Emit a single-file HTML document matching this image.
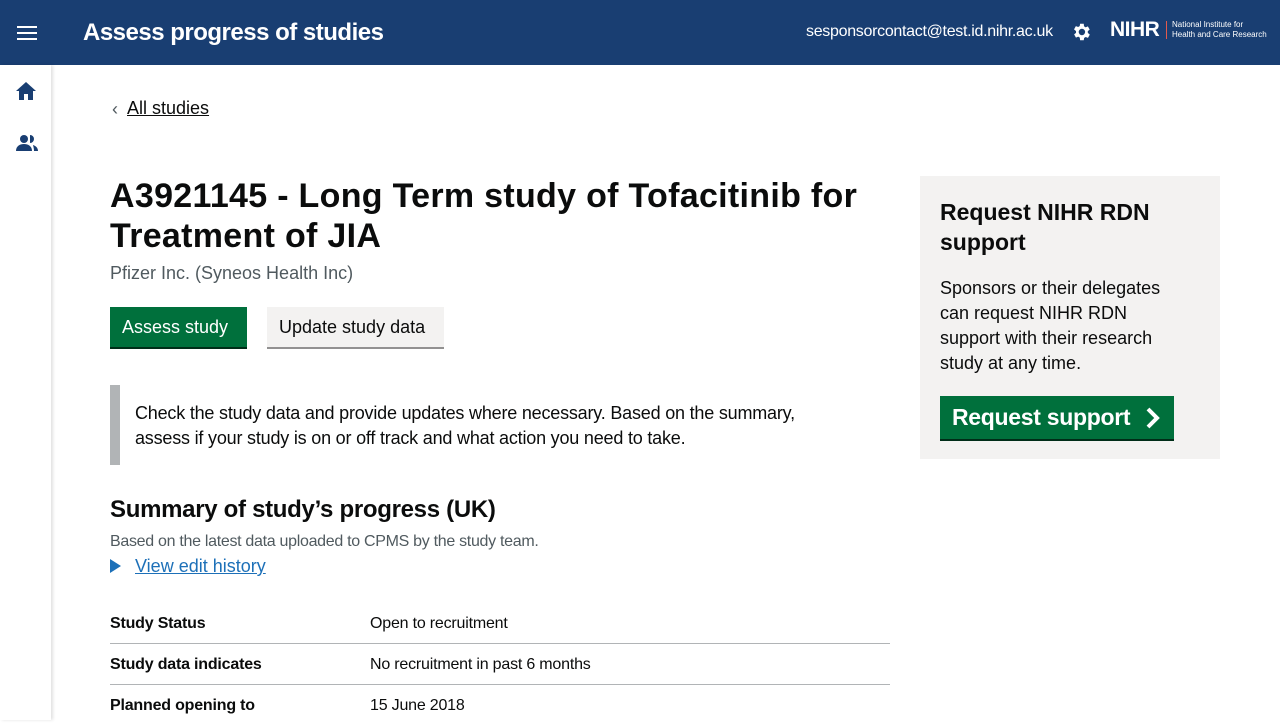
<!DOCTYPE html>
<html><head><meta charset="utf-8"><style>
*{margin:0;padding:0;box-sizing:border-box}
body{width:1280px;height:720px;overflow:hidden;font-family:"Liberation Sans",Arial,sans-serif;background:#fff;color:#0b0c0c;position:relative}
.hdr{position:absolute;left:0;top:0;width:1280px;height:65px;background:#193e72;color:#fff}
.side{position:absolute;left:0;top:65px;width:51px;height:655px;background:#fff;box-shadow:2px 0 3px rgba(0,0,0,.12)}
.a{position:absolute}
.row{position:absolute;left:110px;width:780px;font-size:16px;height:41px;border-bottom:1px solid #b1b4b6}
.row b{position:absolute;left:0;top:12px;letter-spacing:-.2px}
.row span{position:absolute;left:260px;top:12px;letter-spacing:-.2px}
</style></head><body>
<div class="hdr">
 <div class="a" style="left:17px;top:26px;width:20px;height:2px;background:#fff;box-shadow:0 6px 0 #fff,0 12px 0 #fff"></div>
 <div class="a" style="left:83px;top:19px;font-size:24px;font-weight:bold;letter-spacing:-.5px">Assess progress of studies</div>
 <div class="a" style="left:806px;top:23px;font-size:16px;letter-spacing:-.3px">sesponsorcontact@test.id.nihr.ac.uk</div>
 <svg class="a" style="left:1070px;top:21px" width="22" height="22" viewBox="0 0 24 24"><path fill="#fff" d="M19.4 13a7.5 7.5 0 0 0 0-2l2.1-1.6-2-3.5-2.5 1a7 7 0 0 0-1.7-1L15 3h-4l-.4 2.6a7 7 0 0 0-1.7 1l-2.5-1-2 3.5L6.6 11a7.5 7.5 0 0 0 0 2l-2.1 1.6 2 3.5 2.5-1a7 7 0 0 0 1.7 1L11 21h4l.4-2.6a7 7 0 0 0 1.7-1l2.5 1 2-3.5zM13 15.5a3.5 3.5 0 1 1 0-7 3.5 3.5 0 0 1 0 7z"/></svg>
 <div class="a" style="left:1110px;top:18px;font-size:21px;font-weight:bold;letter-spacing:-.5px">NIHR</div>
 <div class="a" style="left:1166px;top:21px;width:1px;height:18px;background:#e05a4e"></div>
 <div class="a" style="left:1172px;top:20px;font-size:8px;line-height:10px">National Institute for<br>Health and Care Research</div>
</div>
<div class="side">
 <svg class="a" style="left:15px;top:16px" width="22" height="20" viewBox="0 0 22 20"><path fill="#193e72" d="M11 1 1 10h3v9h5v-6h4v6h5v-9h3z"/></svg>
 <svg class="a" style="left:15px;top:69px" width="24" height="18" viewBox="0 0 24 18"><circle cx="9" cy="5" r="4" fill="#193e72"/><path fill="#193e72" d="M1 17c0-5 4-7 8-7s8 2 8 7zM15 1a4 4 0 0 1 0 8zM18 11c3 1 5 3 5 6h-4c0-2-0.5-4-1-6z"/></svg>
</div>
<div class="a" style="left:112px;top:99px;font-size:18px;color:#505a5f">‹</div>
<div class="a" style="left:127px;top:98px;font-size:18px;text-decoration:underline">All studies</div>
<div class="a" style="left:110px;top:176px;font-size:34px;font-weight:bold;line-height:40px;width:780px;letter-spacing:.3px">A3921145 - Long Term study of Tofacitinib for Treatment of JIA</div>
<div class="a" style="left:110px;top:263px;font-size:18px;color:#505a5f">Pfizer Inc. (Syneos Health Inc)</div>
<div class="a" style="left:110px;top:307px;width:137px;height:40px;background:#00703c;box-shadow:0 2px 0 #002d18;color:#fff;font-size:18px;padding:10px 12px">Assess study</div>
<div class="a" style="left:267px;top:307px;width:177px;height:40px;background:#f3f2f1;box-shadow:0 2px 0 #929191;font-size:18px;padding:10px 12px">Update study data</div>
<div class="a" style="left:110px;top:385px;width:10px;height:80px;background:#b1b4b6"></div>
<div class="a" style="left:135px;top:401px;font-size:18px;line-height:25px;width:710px;letter-spacing:-.2px">Check the study data and provide updates where necessary. Based on the summary, assess if your study is on or off track and what action you need to take.</div>
<div class="a" style="left:110px;top:496px;font-size:24px;font-weight:bold;letter-spacing:-.3px">Summary of study’s progress (UK)</div>
<div class="a" style="left:110px;top:533px;font-size:16px;color:#505a5f;letter-spacing:-.3px">Based on the latest data uploaded to CPMS by the study team.</div>
<div class="a" style="left:110px;top:559px;width:0;height:0;border-left:11px solid #1d70b8;border-top:7px solid transparent;border-bottom:7px solid transparent"></div>
<div class="a" style="left:135px;top:556px;font-size:18px;color:#1d70b8;text-decoration:underline">View edit history</div>
<div class="row" style="top:603px"><b>Study Status</b><span>Open to recruitment</span></div>
<div class="row" style="top:644px"><b>Study data indicates</b><span>No recruitment in past 6 months</span></div>
<div class="row" style="top:685px;border:0"><b>Planned opening to</b><span>15 June 2018</span></div>
<div class="a" style="left:920px;top:176px;width:300px;height:283px;background:#f3f2f1"></div>
<div class="a" style="left:940px;top:197px;font-size:23px;font-weight:bold;line-height:30px;width:240px">Request NIHR RDN support</div>
<div class="a" style="left:940px;top:276px;font-size:18px;line-height:25px;width:240px">Sponsors or their delegates can request NIHR RDN support with their research study at any time.</div>
<div class="a" style="left:940px;top:396px;width:234px;height:43px;background:#00703c;box-shadow:0 2px 0 #002d18;color:#fff;font-size:23px;font-weight:bold;padding:8px 12px;white-space:nowrap;letter-spacing:-.3px">Request support</div>
<svg class="a" style="left:1145px;top:407px" width="16" height="22" viewBox="0 0 16 22"><path d="M3 2l9 9-9 9" stroke="#fff" stroke-width="4" fill="none"/></svg>
</body></html>
